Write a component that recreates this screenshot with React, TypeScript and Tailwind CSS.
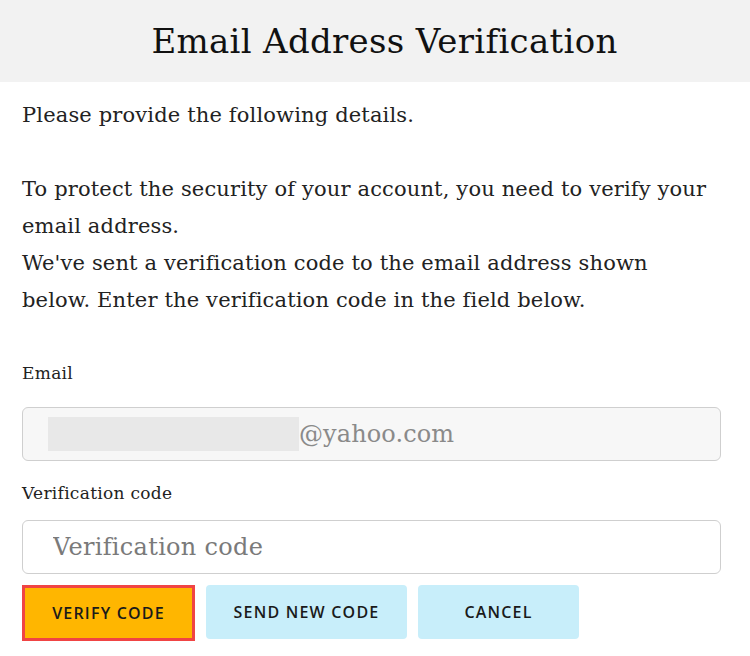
export default function App() {
  const serif = { fontFamily: '"DejaVu Serif", serif' }
  return (
    <div className="w-[750px] h-[656px] bg-white text-[#222]" style={serif}>
      <div className="h-[82px] bg-[#f2f2f2] flex items-center justify-center pl-[19px]">
        <h1 className="text-[34px] text-[#111] tracking-[0.3px]">Email Address Verification</h1>
      </div>

      <div className="px-[22px] text-[21px] leading-[37px] tracking-[0.15px] pt-[15px]">
        <p>Please provide the following details.</p>
        <p className="mt-[37px]">
          <span className="block">To protect the security of your account, you need to verify your</span>
          <span className="block">email address.</span>
          <span className="block">We've sent a verification code to the email address shown</span>
          <span className="block">below. Enter the verification code in the field below.</span>
        </p>
      </div>

      <div className="px-[22px] pr-[29px] mt-[42px]">
        <label className="block text-[17px] leading-[24px] tracking-[0.3px]">Email</label>
        <div className="mt-[22px] h-[54px] rounded-[6px] border border-[#cfcfcf] bg-[#f7f7f7] flex items-center px-[25px]">
          <span className="w-[251px] h-[34px] bg-[#e8e8e8]" />
          <span className="text-[24px] text-[#8a8a8a] tracking-[0.1px]">@yahoo.com</span>
        </div>

        <label className="block mt-[20px] text-[17px] leading-[24px] tracking-[0.3px]">Verification code</label>
        <input
          placeholder="Verification code"
          className="mt-[15px] w-full h-[54px] rounded-[6px] border border-[#cfcfcf] bg-white px-[30px] text-[24px] tracking-[0.3px] placeholder:text-[#7a7a7a] focus:outline-none"
          style={serif}
        />

        <div className="mt-[11px] flex gap-[11px]" style={{ fontFamily: '"Open Sans", sans-serif' }}>
          <button className="w-[173px] h-[56px] bg-[#ffb600] border-[3px] border-[#f04444] text-[16px] font-semibold tracking-[1.2px] text-[#1a1a1a]">
            VERIFY CODE
          </button>
          <button className="w-[201px] h-[54px] rounded-[4px] bg-[#c8eefa] text-[16px] font-semibold tracking-[1.2px] text-[#1a1a1a]">
            SEND NEW CODE
          </button>
          <button className="w-[161px] h-[54px] rounded-[4px] bg-[#c8eefa] text-[16px] font-semibold tracking-[1.2px] text-[#1a1a1a]">
            CANCEL
          </button>
        </div>
      </div>
    </div>
  )
}
